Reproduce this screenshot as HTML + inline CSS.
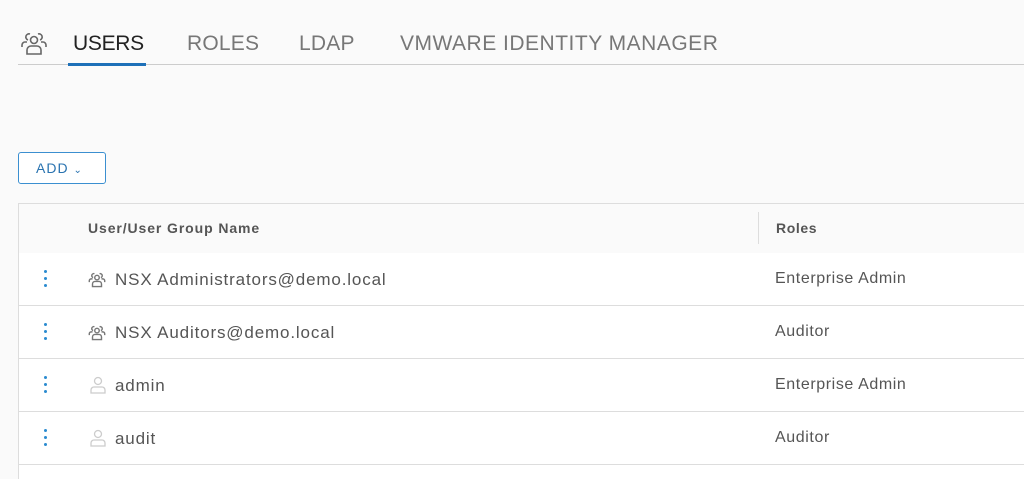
<!DOCTYPE html>
<html style="height:479px;overflow:hidden"><head><style>
body{margin:0;width:1024px;height:479px;background:#fafafa;font-family:"Liberation Sans",sans-serif;position:relative;overflow:hidden}
.a{position:absolute}
.tab{position:absolute;top:32px;font-size:21px;color:#777;letter-spacing:0.2px}
.row{position:absolute;left:18px;width:1010px;height:52px;background:#fff;border-bottom:1px solid #ddd}
.row .n{position:absolute;left:97px;top:17px;font-size:17px;color:#555;letter-spacing:0.85px}
.row .r{position:absolute;left:757px;top:17px;font-size:16px;color:#555;letter-spacing:0.6px}
.dots{position:absolute;left:26px;top:17px;width:3px}
.dots i{display:block;width:3px;height:3px;border-radius:2px;background:#2a8bd0;margin-bottom:4px}
</style></head><body>
<svg class="a" style="left:20px;top:30px" width="28" height="26" viewBox="0 0 28 26" fill="none" stroke="#666" stroke-width="1.6">
<circle cx="14" cy="10" r="3.5"/><path d="M7 24v-4a4 4 0 0 1 4-4h6a4 4 0 0 1 4 4v4z"/>
<path d="M8 10a3 3 0 1 1 2-6"/><path d="M2 17v-2a3 3 0 0 1 3-3h2"/>
<path d="M20 10a3 3 0 1 0-2-6"/><path d="M26 17v-2a3 3 0 0 0-3-3h-2"/></svg>
<div class="tab" style="left:73px;color:#222;letter-spacing:-0.3px">USERS</div>
<div class="tab" style="left:187px">ROLES</div>
<div class="tab" style="left:299px">LDAP</div>
<div class="tab" style="left:400px;letter-spacing:0.5px">VMWARE IDENTITY MANAGER</div>
<div class="a" style="left:18px;top:64px;width:1006px;height:1px;background:#ccc"></div>
<div class="a" style="left:68px;top:63px;width:78px;height:3px;background:#1d70b8"></div>
<div class="a" style="left:18px;top:152px;width:86px;height:30px;border:1.5px solid #3b8fd0;border-radius:3px;background:#fff;color:#2a73b0;font-size:14px;line-height:30px;text-indent:17px;letter-spacing:1px">ADD <span style="font-size:10px">&#8964;</span></div>
<div class="a" style="left:18px;top:203px;width:1010px;height:49px;border:1px solid #ddd;border-right:none;background:#fafafa"></div>
<div class="a" style="left:88px;top:220px;font-size:14px;font-weight:bold;color:#555;letter-spacing:0.9px">User/User Group Name</div>
<div class="a" style="left:758px;top:212px;width:1px;height:32px;background:#ddd"></div>
<div class="a" style="left:776px;top:220px;font-size:14px;font-weight:bold;color:#555;letter-spacing:0.6px">Roles</div>
<div class="a" style="left:18px;top:253px;width:1px;height:226px;background:#ddd;z-index:2"></div>
<div class="row" style="top:253px"><div class="dots"><i></i><i></i><i></i></div>
<svg class="a" style="left:70px;top:18px" width="18" height="17" viewBox="0 0 28 26" fill="none" stroke="#777" stroke-width="2.2"><circle cx="14" cy="10" r="3.5"/><path d="M7 24v-4a4 4 0 0 1 4-4h6a4 4 0 0 1 4 4v4z"/><path d="M8 10a3 3 0 1 1 2-6"/><path d="M2 17v-2a3 3 0 0 1 3-3h2"/><path d="M20 10a3 3 0 1 0-2-6"/><path d="M26 17v-2a3 3 0 0 0-3-3h-2"/></svg>
<div class="n">NSX Administrators@demo.local</div><div class="r">Enterprise Admin</div></div>
<div class="row" style="top:306px"><div class="dots"><i></i><i></i><i></i></div>
<svg class="a" style="left:70px;top:18px" width="18" height="17" viewBox="0 0 28 26" fill="none" stroke="#777" stroke-width="2.2"><circle cx="14" cy="10" r="3.5"/><path d="M7 24v-4a4 4 0 0 1 4-4h6a4 4 0 0 1 4 4v4z"/><path d="M8 10a3 3 0 1 1 2-6"/><path d="M2 17v-2a3 3 0 0 1 3-3h2"/><path d="M20 10a3 3 0 1 0-2-6"/><path d="M26 17v-2a3 3 0 0 0-3-3h-2"/></svg>
<div class="n">NSX Auditors@demo.local</div><div class="r">Auditor</div></div>
<div class="row" style="top:359px"><div class="dots"><i></i><i></i><i></i></div>
<svg class="a" style="left:72px;top:17px" width="16" height="18" viewBox="0 0 16 18" fill="none" stroke="#ccc" stroke-width="1.3"><circle cx="8" cy="5" r="3.5"/><path d="M1 17v-3a3 3 0 0 1 3-3h8a3 3 0 0 1 3 3v3z"/></svg>
<div class="n">admin</div><div class="r">Enterprise Admin</div></div>
<div class="row" style="top:412px"><div class="dots"><i></i><i></i><i></i></div>
<svg class="a" style="left:72px;top:17px" width="16" height="18" viewBox="0 0 16 18" fill="none" stroke="#ccc" stroke-width="1.3"><circle cx="8" cy="5" r="3.5"/><path d="M1 17v-3a3 3 0 0 1 3-3h8a3 3 0 0 1 3 3v3z"/></svg>
<div class="n">audit</div><div class="r">Auditor</div></div>
<div class="row" style="top:465px;height:14px;border-bottom:none"></div>
</body></html>
